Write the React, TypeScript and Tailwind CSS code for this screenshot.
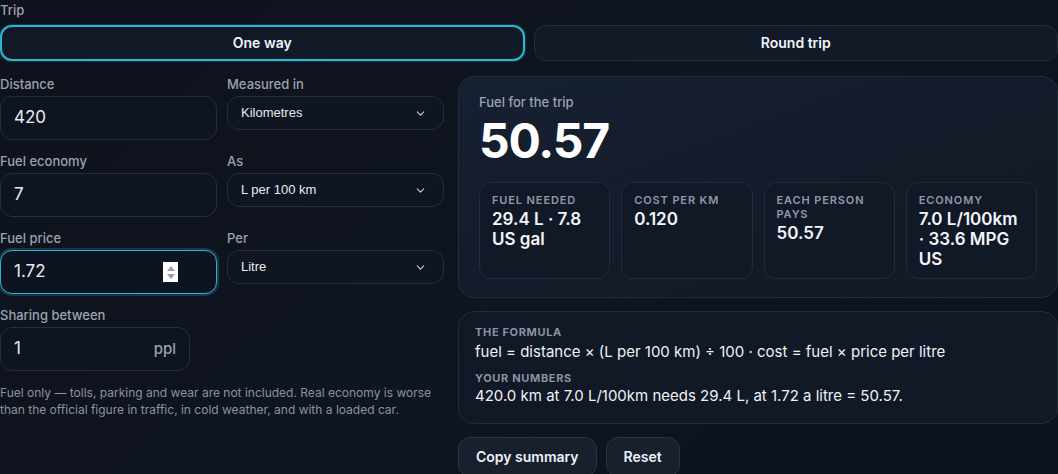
import { ChevronDown } from "lucide-react";

const stats = [
  { label: "Fuel needed", value: "29.4 L · 7.8 US gal" },
  { label: "Cost per km", value: "0.120" },
  { label: "Each person pays", value: "50.57" },
  { label: "Economy", value: "7.0 L/100km · 33.6 MPG US" },
];

function Label({ children }: { children: React.ReactNode }) {
  return <div className="text-[13px] leading-4 font-medium text-[#9aa3b1] mb-1">{children}</div>;
}

function TextField({ value, focused, spinner }: { value: string; focused?: boolean; spinner?: boolean }) {
  return (
    <div
      className={
        "relative h-11 rounded-xl border flex items-center px-[13px] text-[17px] text-[#e8ecf2] " +
        (focused
          ? "border-[#2fb3cc] bg-[#0d1320] shadow-[0_0_0_2px_rgba(34,170,200,0.25)]"
          : "border-[#252e3d] bg-[#0e1420]")
      }
    >
      <span>{value}</span>
      {spinner && (
        <span className="absolute left-[162px] top-[11px] w-[15px] h-5 bg-white flex flex-col items-center justify-center gap-[3px]">
          <span className="w-0 h-0 border-l-[4px] border-r-[4px] border-b-[5px] border-l-transparent border-r-transparent border-b-[#a0a0a0]" />
          <span className="w-0 h-0 border-l-[4px] border-r-[4px] border-t-[5px] border-l-transparent border-r-transparent border-t-[#a0a0a0]" />
        </span>
      )}
    </div>
  );
}

function SelectField({ value }: { value: string }) {
  return (
    <div className="h-[34px] rounded-xl border border-[#252e3d] bg-[#0f1521] flex items-center justify-between pl-[13px] pr-[16px]">
      <span className="text-[13px] text-[#e8ecf2] font-['Liberation_Sans',Arial,sans-serif]">{value}</span>
      <ChevronDown className="w-[13px] h-[13px] text-[#c9d0da]" strokeWidth={2} />
    </div>
  );
}

export default function App() {
  return (
    <div className="min-h-screen w-full bg-[linear-gradient(135deg,#0e121c_0%,#0f1521_50%,#0d131d_100%)] font-['Inter',sans-serif] text-[#eef2f7]">
      {/* Trip */}
      <div className="text-[13px] leading-5 text-[#9aa3b1] font-medium">Trip</div>
      <div className="grid grid-cols-2 gap-[9px] mt-[5px]">
        <button className="h-9 rounded-xl border-2 border-[#2fb3cc] bg-[#111826] shadow-[0_0_0_1px_rgba(34,170,200,0.25)] text-sm font-semibold text-[#f1f4f8]">
          One way
        </button>
        <button className="h-9 rounded-xl border border-[#252e3d] bg-[#131a27] text-sm font-semibold text-[#f1f4f8]">
          Round trip
        </button>
      </div>

      <div className="grid grid-cols-[444px_1fr] gap-[14px] mt-[15px]">
        {/* Inputs */}
        <div>
          <div className="grid grid-cols-2 gap-x-[10px] gap-y-[13px]">
            <div>
              <Label>Distance</Label>
              <TextField value="420" />
            </div>
            <div>
              <Label>Measured in</Label>
              <SelectField value="Kilometres" />
            </div>
            <div>
              <Label>Fuel economy</Label>
              <TextField value="7" />
            </div>
            <div>
              <Label>As</Label>
              <SelectField value="L per 100 km" />
            </div>
            <div>
              <Label>Fuel price</Label>
              <TextField value="1.72" focused spinner />
            </div>
            <div>
              <Label>Per</Label>
              <SelectField value="Litre" />
            </div>
            <div>
              <Label>Sharing between</Label>
              <div className="h-11 w-[190px] rounded-xl border border-[#252e3d] bg-[#0e1420] flex items-center justify-between px-[13px]">
                <span className="text-[17px] text-[#e8ecf2]">1</span>
                <span className="text-[15px] font-medium text-[#9aa3b1]">ppl</span>
              </div>
            </div>
          </div>
          <p className="mt-[13px] text-xs leading-[17px] text-[#8b93a1]">
            Fuel only — tolls, parking and wear are not included. Real economy is worse than the official figure in traffic, in cold weather, and with a loaded car.
          </p>
        </div>

        {/* Results */}
        <div className="flex flex-col">
          <div className="rounded-2xl border border-[#232c3b] bg-[linear-gradient(160deg,#172031_0%,#131b29_60%,#121a27_100%)] px-5 pt-[17px] pb-[18px]">
            <div className="text-[13px] leading-4 font-medium text-[#9aa3b1]">Fuel for the trip</div>
            <div className="text-5xl leading-none font-bold tracking-tight text-white mt-[7px]">50.57</div>
            <div className="grid grid-cols-4 gap-[11px] mt-[17px]">
              {stats.map((s) => (
                <div key={s.label} className="h-[97px] rounded-xl border border-[#222b3a] bg-[#111927] px-3 pt-[10px]">
                  <div className="text-[11px] leading-[14px] font-semibold uppercase tracking-[0.08em] text-[#8f98a7]">
                    {s.label}
                  </div>
                  <div className="mt-[2px] text-[17px] leading-5 font-semibold text-[#f3f5f8]">{s.value}</div>
                </div>
              ))}
            </div>
          </div>

          <div className="mt-[13px] rounded-2xl border border-[#232c3b] bg-[#111826] px-4 pt-[13px] pb-[16px]">
            <div className="text-[11px] leading-[14px] font-bold uppercase tracking-[0.06em] text-[#8a93a2]">The formula</div>
            <div className="mt-[2px] text-[15px] leading-[22px] text-[#eef2f7]">
              fuel = distance × (L per 100 km) ÷ 100 · cost = fuel × price per litre
            </div>
            <div className="mt-[8px] text-[11px] leading-[14px] font-bold uppercase tracking-[0.06em] text-[#8a93a2]">Your numbers</div>
            <div className="text-[15px] leading-[22px] text-[#eef2f7]">
              420.0 km at 7.0 L/100km needs 29.4 L, at 1.72 a litre = 50.57.
            </div>
          </div>

          <div className="flex gap-[9px] mt-[13px]">
            <button className="h-10 px-[17px] rounded-xl border border-[#2a3343] bg-[#18202d] text-sm font-semibold text-[#eef2f7]">
              Copy summary
            </button>
            <button className="h-10 px-[17px] rounded-xl border border-[#2a3343] bg-[#18202d] text-sm font-semibold text-[#eef2f7]">
              Reset
            </button>
          </div>
        </div>
      </div>
    </div>
  );
}
